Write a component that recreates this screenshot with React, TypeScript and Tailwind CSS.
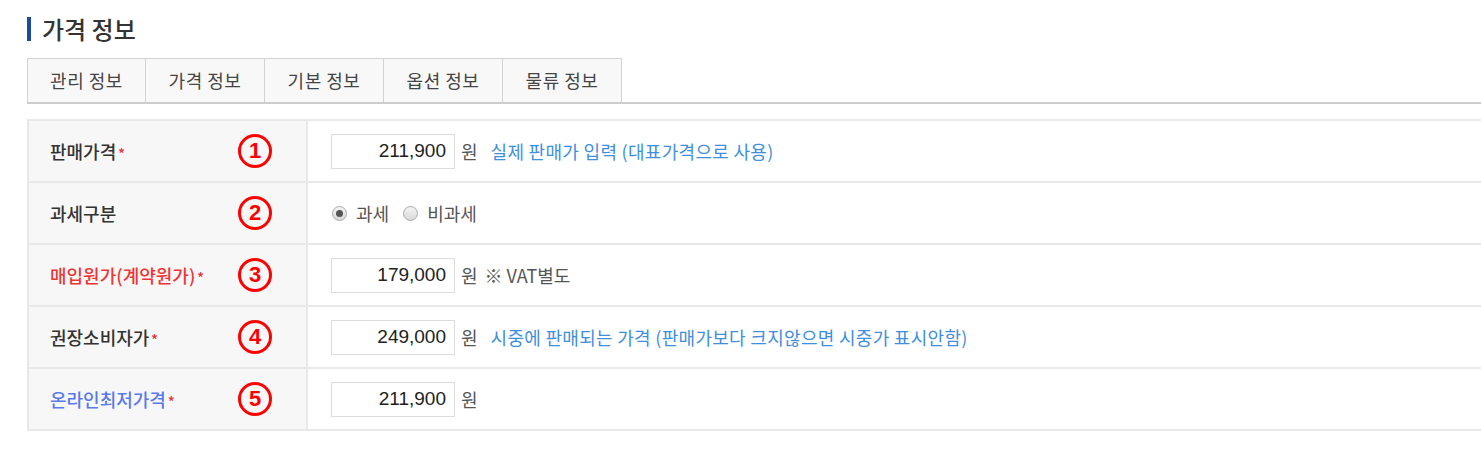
import React from 'react';

const tabs = ['관리 정보', '가격 정보', '기본 정보', '옵션 정보', '물류 정보'];

const Star = () => <span className="ml-[2px] text-[13px] font-bold text-[#e8383d] align-[1px]">*</span>;

const Num: React.FC<{ n: number }> = ({ n }) => (
    <div className="w-[34px] h-[34px] rounded-full border-[3px] border-[#ff0000] flex items-center justify-center text-[#ff0000] font-bold text-[22px] leading-none font-['Liberation_Sans',sans-serif]">
        {n}
    </div>
);

const PriceInput: React.FC<{ value: string }> = ({ value }) => (
    <div className="w-[124px] h-[35px] border border-[#dcdcdc] bg-white flex items-center justify-end pr-[8px] text-[19px] text-[#222] font-['Liberation_Sans',sans-serif]">
        {value}
    </div>
);

const Radio: React.FC<{ checked?: boolean; label: string }> = ({ checked, label }) => (
    <div className="flex items-center gap-[9px]">
        <div className="w-[15px] h-[15px] rounded-full border border-[#a9a9a9] bg-gradient-to-b from-[#f4f4f4] to-[#d9d9d9] flex items-center justify-center">
            {checked && <div className="w-[7px] h-[7px] rounded-full bg-[#555]" />}
        </div>
        <span className="text-[#555]">{label}</span>
    </div>
);

type Row = { label: React.ReactNode; star: boolean; color: string; body: React.ReactNode };

const rows: Row[] = [
    {
        label: '판매가격',
        star: true,
        color: 'text-[#333]',
        body: (
            <>
                <PriceInput value="211,900" />
                <span className="ml-[6px] text-[#555]">원</span>
                <span className="ml-[13px] text-[#3f8fe0] tracking-[0.3px]">실제 판매가 입력 (대표가격으로 사용)</span>
            </>
        ),
    },
    {
        label: '과세구분',
        star: false,
        color: 'text-[#333]',
        body: (
            <div className="flex items-center gap-[14px] pl-[1px]">
                <Radio checked label="과세" />
                <Radio label="비과세" />
            </div>
        ),
    },
    {
        label: '매입원가(계약원가)',
        star: true,
        color: 'text-[#ee3535]',
        body: (
            <>
                <PriceInput value="179,000" />
                <span className="ml-[6px] text-[#555]">원</span>
                <span className="ml-[7px] text-[#555]">※ VAT별도</span>
            </>
        ),
    },
    {
        label: '권장소비자가',
        star: true,
        color: 'text-[#333]',
        body: (
            <>
                <PriceInput value="249,000" />
                <span className="ml-[6px] text-[#555]">원</span>
                <span className="ml-[13px] text-[#3f8fe0] tracking-[0.3px]">시중에 판매되는 가격 (판매가보다 크지않으면 시중가 표시안함)</span>
            </>
        ),
    },
    {
        label: '온라인최저가격',
        star: true,
        color: 'text-[#5b7ae8]',
        body: (
            <>
                <PriceInput value="211,900" />
                <span className="ml-[6px] text-[#555]">원</span>
            </>
        ),
    },
];

export default function App() {
    return (
        <div className="w-[1481px] h-[459px] bg-white pl-[27px] pt-[17px] font-['Noto_Sans_CJK_KR','Noto_Sans',sans-serif] text-[18px] overflow-hidden">
            {/* title */}
            <div className="flex items-center h-[24px]">
                <div className="w-[4px] h-[24px] bg-[#1d4a9b]" />
                <h2 className="ml-[11px] text-[24px] leading-none text-[#333] font-medium">가격 정보</h2>
            </div>

            {/* tabs */}
            <div className="mt-[17px] flex border-b-2 border-[#cdcdcd]">
                {tabs.map((t, i) => (
                    <div
                        key={t}
                        className={
                            'w-[119px] h-[44px] flex items-center justify-center bg-[#f8f8f8] border-t border-r border-[#d3d3d3] text-[#444] tracking-[0.5px] ' +
                            (i === 0 ? 'border-l' : '')
                        }
                    >
                        {t}
                    </div>
                ))}
            </div>

            {/* table */}
            <div className="mt-[15px] border-t-2 border-l-2 border-[#e8e8e8]">
                {rows.map((r, i) => (
                    <div key={i} className="flex h-[62px] border-b-2 border-[#e8e8e8]">
                        <div className="w-[279px] shrink-0 bg-[#f7f7f7] border-r-2 border-[#e8e8e8] flex items-center justify-between pl-[21px] pr-[34px]">
                            <span className={'font-medium ' + r.color}>
                                {r.label}
                                {r.star && <Star />}
                            </span>
                            <Num n={i + 1} />
                        </div>
                        <div className="flex-1 flex items-center pl-[23px]">{r.body}</div>
                    </div>
                ))}
            </div>
        </div>
    );
}
